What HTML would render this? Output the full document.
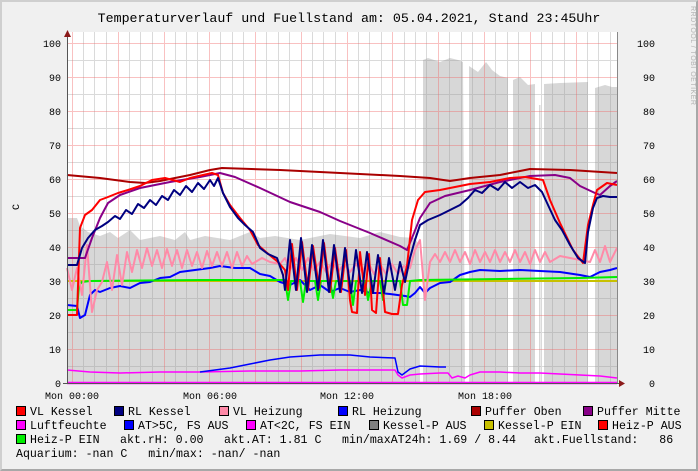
<!DOCTYPE html>
<html><head><meta charset="utf-8"><style>
html,body{margin:0;padding:0}
body{width:698px;height:471px;overflow:hidden;background:#f0f0f0;font-family:"Liberation Mono","DejaVu Sans Mono",monospace;}
#wrap{position:relative;width:694px;height:467px;border-top:2px solid #cfcfcf;border-left:2px solid #cfcfcf;border-right:2px solid #a8a8a8;border-bottom:2px solid #a8a8a8;background:#f0f0f0}
</style></head><body><div id="wrap">
<svg width="694" height="467" viewBox="2 2 694 467" xmlns="http://www.w3.org/2000/svg" style="position:absolute;left:0;top:0">
<text x="349" y="22" text-anchor="middle" font-family="Liberation Mono,monospace" font-size="13.3" fill="#000">Temperaturverlauf und Fuellstand am: 05.04.2021, Stand 23:45Uhr</text>
<text transform="translate(691,6) rotate(90)" font-family="Liberation Sans,sans-serif" font-size="7" fill="#b0b0b0" letter-spacing="0.5">RRDTOOL / TOBI OETIKER</text>
<text transform="translate(19,210) rotate(-90)" font-family="Liberation Mono,monospace" font-size="10" fill="#000">C</text>
<rect x="67" y="32" width="551" height="351" fill="#fff"/>
<g fill="#d7d7d7">
<polygon points="67,383 67,218 77,218 80,226 88,232 100,236 110,232 118,238 130,230 140,240 160,236 175,240 185,232 190,240 205,236 230,240 250,232 260,238 275,236 300,240 330,234 360,238 380,232 400,237 415,238 419,245 420,383"/>
<polygon points="423,383 423,60 428,58 440,62 450,58 458,60 463,62 465,383"/>
<polygon points="469,383 469,66 478,72 486,62 492,70 500,76 508,78 508,383"/>
<polygon points="513,383 513,80 520,77 528,85 535,84 535,383"/>
<polygon points="544,383 544,84 560,83 588,82 588,383"/>
<polygon points="595,383 595,88 605,85 612,87 617,87 617,383"/>
<rect x="539" y="105" width="1.5" height="278"/>
</g>
<path fill="none" stroke="rgba(150,150,150,0.35)" stroke-width="1" d="M83.5 32V383M94.5 32V383M106.5 32V383M129.5 32V383M140.5 32V383M152.5 32V383M175.5 32V383M186.5 32V383M197.5 32V383M220.5 32V383M232.5 32V383M243.5 32V383M266.5 32V383M278.5 32V383M289.5 32V383M312.5 32V383M323.5 32V383M335.5 32V383M358.5 32V383M369.5 32V383M381.5 32V383M404.5 32V383M415.5 32V383M426.5 32V383M449.5 32V383M461.5 32V383M472.5 32V383M495.5 32V383M507.5 32V383M518.5 32V383M541.5 32V383M552.5 32V383M564.5 32V383M587.5 32V383M598.5 32V383M610.5 32V383M67 366.5H618M67 332.5H618M67 298.5H618M67 264.5H618M67 230.5H618M67 196.5H618M67 162.5H618M67 128.5H618M67 94.5H618M67 60.5H618"/>
<path fill="none" stroke="rgba(240,100,100,0.4)" stroke-width="1" d="M72.5 32V383M118.5 32V383M164.5 32V383M209.5 32V383M255.5 32V383M301.5 32V383M347.5 32V383M392.5 32V383M438.5 32V383M484.5 32V383M530.5 32V383M576.5 32V383M67 349.5H618M67 315.5H618M67 281.5H618M67 247.5H618M67 213.5H618M67 179.5H618M67 145.5H618M67 111.5H618M67 77.5H618M67 43.5H618"/>
<g fill="none" stroke-linejoin="round" stroke-width="2">
<polyline stroke="#c8c000" points="67,281 617,281"/>
<polyline stroke="#ff00ff" stroke-width="1.5" points="67,370 90,372 120,373 160,372 200,372 250,371 300,371 340,370 395,370 398,375 402,378 410,375 420,374 440,373 448,373 452,378 458,376 465,378 470,375 480,372 500,372 520,373 540,373 560,374 580,375 600,376 617,378"/>
<polyline stroke="#0000ff" stroke-width="1.5" points="200,372 230,368 250,364 270,360 290,357 320,355 350,355 370,357 395,358 398,372 402,375 410,369 420,366 440,367 446,367"/>
<polyline stroke="#ff00ff" stroke-width="2.5" points="67,383 617,383"/>
<polyline stroke="#0000ff" points="67,305 77,306 80,318 85,315 90,295 95,290 100,292 110,288 120,286 130,288 140,283 150,282 160,278 170,277 180,272 195,270 210,268 220,266 235,268 250,268 260,274 270,276 280,282 290,285 300,280 310,290 320,285 330,292 340,288 350,292 360,290 370,293 380,293 390,294 405,296 410,297 415,293 420,287 425,293 430,288 440,283 450,282 460,275 470,272 480,270 500,271 520,270 540,271 560,272 580,275 590,277 600,272 610,270 617,268"/>
<polyline stroke="#00ee00" points="67,310 77,310 79,285 82,282 90,281 200,280 285,280 288,300 291,281 300,281 303,302 306,281 315,281 318,300 321,281 330,281 333,298 336,281 350,281 353,305 356,281 365,281 368,300 372,281 380,281 383,300 386,281 400,281 403,305 407,305 410,281 420,280 500,279 580,278 617,277"/>
<polyline stroke="#ff8aa8" points="67,268 72,290 77,268 82,295 87,245 92,312 97,290 102,282 107,262 112,290 117,255 122,285 127,252 132,272 137,250 142,268 147,248 152,266 157,250 162,268 167,249 172,266 177,250 182,268 187,250 192,266 197,252 202,268 207,251 212,266 217,252 222,266 227,252 232,268 237,252 242,266 247,256 252,264 262,258 270,262 280,264 285,258 290,270 296,258 302,270 308,258 314,270 320,262 326,272 332,262 338,272 344,264 350,272 356,264 362,272 368,262 374,274 380,264 386,274 392,264 398,274 404,266 410,268 415,250 420,240 425,300 430,262 435,254 440,262 445,252 450,262 455,250 460,262 465,252 470,264 475,250 480,262 485,252 490,262 495,250 500,262 505,252 510,262 515,250 520,262 525,252 530,264 535,250 540,262 545,252 550,262 560,256 570,258 580,260 590,262 595,250 600,262 605,246 610,262 617,248"/>
<polyline stroke="#880088" points="67,258 85,258 92,238 100,218 108,203 120,195 140,188 170,182 200,177 220,173 235,177 260,188 290,202 320,212 340,221 370,233 400,246 407,250 412,238 420,218 430,203 445,196 470,190 500,182 530,176 555,175 570,178 580,186 595,193 600,195 610,186 617,181"/>
<polyline stroke="#aa0000" points="67,175 100,178 130,182 145,183 160,181 190,175 210,170 222,168 280,170 340,173 400,176 430,178 450,181 470,178 500,175 520,171 530,169 570,170 617,173"/>
<polyline stroke="#ff0000" points="67,315 77,315 80,228 85,215 92,210 100,200 108,197 118,193 128,190 140,186 152,180 165,178 180,182 190,178 203,175 212,173 218,175 223,193 230,205 240,218 250,230 258,245 266,252 278,262 285,270 288,290 292,244 297,290 302,242 308,290 313,246 319,288 324,243 330,292 335,248 341,292 346,250 350,300 352,312 357,313 360,252 365,295 369,254 372,310 376,313 380,258 385,312 392,314 398,314 402,285 407,266 412,220 418,200 425,192 440,190 455,187 470,184 490,182 510,178 525,177 543,180 550,200 560,223 573,250 583,263 588,225 593,205 597,190 607,183 617,185"/>
<polyline stroke="#000080" points="67,265 77,265 82,248 88,238 95,230 102,226 108,222 115,216 120,219 126,210 132,214 138,204 144,208 150,200 156,205 162,196 168,200 174,190 180,195 186,186 192,192 198,183 204,189 210,180 214,186 218,178 223,193 230,207 238,218 245,225 253,232 260,248 268,254 277,258 283,275 285,290 290,240 296,290 301,238 307,292 312,245 318,290 323,240 329,292 334,245 340,292 345,248 351,293 356,250 362,293 367,252 373,293 378,255 384,293 389,258 395,290 400,262 405,282 410,258 415,240 420,225 428,220 440,215 450,210 460,205 468,198 475,190 482,193 490,185 498,190 505,182 512,188 520,182 528,188 535,185 542,192 548,205 555,220 562,230 570,245 578,258 585,263 588,232 593,208 597,198 603,196 610,197 617,197"/>
</g>
<path d="M67.5 383V36M63 383.5H620" stroke="#555" stroke-width="1" fill="none"/>
<polygon points="64,37 71,37 67.5,30" fill="#8b1a1a"/>
<polygon points="619,380 619,387 625,383.5" fill="#8b1a1a"/>
<path d="M617.5 32V383" stroke="#888" stroke-width="1"/>
<g font-family="Liberation Mono,monospace" font-size="10" fill="#000" text-anchor="end">
<text x="61" y="47">100</text><text x="61" y="81">90</text><text x="61" y="115">80</text><text x="61" y="149">70</text><text x="61" y="183">60</text><text x="61" y="217">50</text><text x="61" y="251">40</text><text x="61" y="285">30</text><text x="61" y="319">20</text><text x="61" y="353">10</text><text x="61" y="387">0</text>
<text x="655" y="47">100</text><text x="655" y="81">90</text><text x="655" y="115">80</text><text x="655" y="149">70</text><text x="655" y="183">60</text><text x="655" y="217">50</text><text x="655" y="251">40</text><text x="655" y="285">30</text><text x="655" y="319">20</text><text x="655" y="353">10</text><text x="655" y="387">0</text>
</g>
<g font-family="Liberation Mono,monospace" font-size="10" fill="#000" text-anchor="middle">
<text x="72" y="399">Mon 00:00</text><text x="210" y="399">Mon 06:00</text><text x="347" y="399">Mon 12:00</text><text x="485" y="399">Mon 18:00</text>
</g>
<g stroke="#000" stroke-width="1">
<rect x="16.5" y="406.5" width="9" height="9" fill="#ff0000"/>
<rect x="114.5" y="406.5" width="9" height="9" fill="#000080"/>
<rect x="219.5" y="406.5" width="9" height="9" fill="#ff8aa8"/>
<rect x="338.5" y="406.5" width="9" height="9" fill="#0000ff"/>
<rect x="471.5" y="406.5" width="9" height="9" fill="#aa0000"/>
<rect x="583.5" y="406.5" width="9" height="9" fill="#880088"/>
<rect x="16.5" y="420.5" width="9" height="9" fill="#ff00ff"/>
<rect x="124.5" y="420.5" width="9" height="9" fill="#0000ff"/>
<rect x="246.5" y="420.5" width="9" height="9" fill="#ff00ff"/>
<rect x="369.5" y="420.5" width="9" height="9" fill="#808080"/>
<rect x="484.5" y="420.5" width="9" height="9" fill="#c8c000"/>
<rect x="598.5" y="420.5" width="9" height="9" fill="#ff0000"/>
<rect x="16.5" y="434.5" width="9" height="9" fill="#00ee00"/>
</g>
<g font-family="Liberation Mono,monospace" font-size="11.6" fill="#000">
<text x="30" y="415">VL Kessel</text><text x="128" y="415">RL Kessel</text><text x="233" y="415">VL Heizung</text><text x="352" y="415">RL Heizung</text><text x="485" y="415">Puffer Oben</text><text x="597" y="415">Puffer Mitte</text>
<text x="30" y="429">Luftfeuchte</text><text x="138" y="429">AT&gt;5C, FS AUS</text><text x="260" y="429">AT&lt;2C, FS EIN</text><text x="383" y="429">Kessel-P AUS</text><text x="498" y="429">Kessel-P EIN</text><text x="612" y="429">Heiz-P AUS</text>
<text x="30" y="443">Heiz-P EIN</text><text x="120" y="443">akt.rH: 0.00</text><text x="224" y="443">akt.AT: 1.81 C</text><text x="342" y="443">min/maxAT24h: 1.69 / 8.44</text><text x="534" y="443">akt.Fuellstand:&#160;&#160;&#160;86</text>
<text x="16" y="457">Aquarium: -nan C&#160;&#160;&#160;min/max: -nan/ -nan</text>
</g>
</svg></div></body></html>
